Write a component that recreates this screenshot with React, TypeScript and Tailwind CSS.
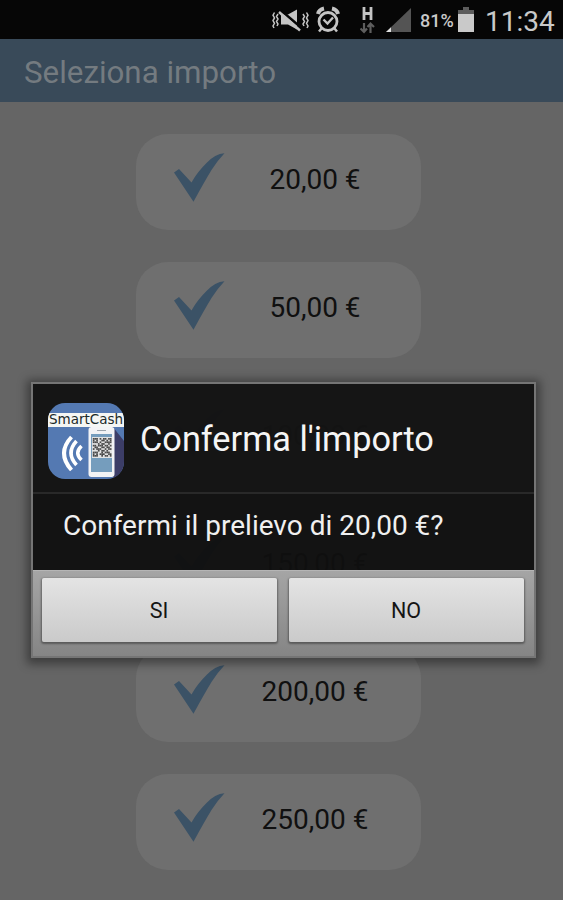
import React from 'react'

const AMOUNTS = ['20,00 €', '50,00 €', '100,00 €', '150,00 €', '200,00 €', '250,00 €']

// Dark modules of the code on the phone screen
const QR_ROWS = [
  '11101011011',
  '10100110101',
  '11101001111',
  '00010110010',
  '11011101101',
  '01100110110',
  '10111001011',
  '00010110100',
  '11100101110',
  '10101110011',
  '11100101101',
]

const StatusBar = () => (
  <div className="flex h-[39px] shrink-0 items-center bg-[#060606] pl-[270px] text-[#c9c9c9]">
    {/* Muted, vibrate */}
    <svg width="40" height="30" viewBox="0 0 40 30" className="shrink-0" fill="none" stroke="#c4c4c4">
      <path d="M4.500 7.500l-1.500 2.700 1.500 2.700-1.500 2.700 1.500 2.700-1.500 2.700 1 2M8 9l-1.500 2.500 1.500 2.500-1.500 2.500 1.500 2.500-1 2" strokeWidth="1.500" />
      <path d="M36.500 7.500l1.500 2.700-1.500 2.700 1.500 2.700-1.500 2.700 1.500 2.700-1 2M33 9l1.500 2.500-1.500 2.500 1.500 2.500-1.500 2.500 1 2" strokeWidth="1.500" />
      <path d="M11 9.500h7l9-5v20l-9-5h-7z" fill="#c4c4c4" stroke="none" />
      <path d="M11 5.500l20 17" stroke="#060606" strokeWidth="2.500" />
      <path d="M9 7l21 18.500" strokeWidth="2.500" />
    </svg>
    {/* Alarm */}
    <svg width="26" height="30" viewBox="0 0 26 30" className="ml-[6px] shrink-0" fill="none" stroke="#c4c4c4">
      <circle cx="12" cy="16.500" r="9" strokeWidth="2.800" />
      <path d="M2 9q1-4.500 6-5.500M22 9q-1-4.500-6-5.500" strokeWidth="4" />
      <path d="M5.500 23.500l-2.500 3M18.500 23.500l2.500 3" strokeWidth="2.500" />
      <path d="M7.500 14.500l4 4 5.500-6" strokeWidth="2.400" />
    </svg>
    {/* Mobile data */}
    <svg width="16" height="28" viewBox="0 0 16 28" className="ml-[18px] shrink-0" fill="none">
      <path d="M4 1v13M11 1v13M4 7.500h7" stroke="#c4c4c4" strokeWidth="2.800" />
      <path d="M4 17v9M.500 22.500l3.500 3.500 3-3.500M10.500 27v-9M7.500 21l3-3.500 3.500 3.500" stroke="#5e5e5e" strokeWidth="2.200" />
    </svg>
    <svg width="26" height="26" viewBox="0 0 26 26" className="ml-[10px] shrink-0">
      <path d="M0 25L25 1v24z" fill="#545454" />
      <path d="M0 25l5-4.800V25z" fill="#e0e0e0" />
    </svg>
    <span className="mt-[3px] ml-[8px] w-[36px] text-[18px] leading-none font-medium">81%</span>
    <svg width="16" height="26" viewBox="0 0 16 26" className="ml-[2px] shrink-0">
      <path d="M5 0h6v3h5v5H0V3h5z" fill="#5c5c5c" />
      <path d="M0 7h16v18H0z" fill="#c9c9c9" />
    </svg>
    <span className="mt-[4px] ml-[11px] text-[28px] leading-none">11:34</span>
  </div>
)

const AmountRow = ({ label }: { label: string }) => (
  <div className="flex h-[96px] w-[285px] shrink-0 items-center rounded-[32px] bg-[#6f6f6f]">
    <svg width="52" height="50" viewBox="0 0 52 50" className="mb-[9px] ml-[38px] shrink-0">
      <path d="M0 19.500L5 16L17.500 29.500C22 21.500 27 15.500 32.500 10Q41 1 50.500 .300Q44 7 37.500 17Q29 31 19.500 48.800Z" fill="#3b5266" />
    </svg>
    <span className="mr-[32px] mb-[4px] flex-1 pl-[15px] text-center text-[28px] leading-none text-[#101010]">{label}</span>
  </div>
)

const AppIcon = () => (
  <div className="relative h-[76px] w-[76px] shrink-0 overflow-hidden rounded-[17px] bg-[#5479b2]">
    <svg width="76" height="76" viewBox="0 0 76 76">
      <path d="M65 24l11 14v38H65z" fill="#3c3d67" />
      <rect x="40.500" y="24" width="26" height="50" rx="3" fill="#f2f3f5" />
      <rect x="43" y="31" width="21" height="38" fill="#759dbd" />
      <rect x="49" y="27" width="9" height="1" fill="#9da5ad" />
      <rect x="44" y="34" width="20" height="21" fill="#e2e2e2" />
      {QR_ROWS.map((row, y) =>
        row.split('').map((cell, x) =>
          cell === '1' ? (
            <rect key={`${x}-${y}`} x={44.8 + x * 1.7} y={35 + y * 1.7} width="1.700" height="1.700" fill="#4a4a4a" />
          ) : null
        )
      )}
      <g fill="none" stroke="#fff" strokeWidth="3.600">
        <path d="M23.500 34q-15 16 0 33" strokeWidth="4" />
        <path d="M28.500 38q-11 12 0 24" />
        <path d="M33.500 43q-7.500 7 0 14" />
      </g>
    </svg>
    <div className="absolute top-[10px] left-0 flex h-[14px] w-full items-center justify-center bg-[#f4f6f4] font-['DejaVu_Sans'] text-[13.500px] leading-none text-[#1c2a2a]">
      SmartCash
    </div>
  </div>
)

const DialogButton = ({ label }: { label: string }) => (
  <button className="flex h-[64px] flex-1 items-center justify-center rounded-[2px] bg-linear-to-b from-[#e4e4e4] to-[#cacaca] pt-[2px] pr-[1px] text-[21.500px] text-[#151515] shadow-[0_1px_2px_1px_rgba(0,0,0,0.35)]">
    {label}
  </button>
)

const ConfirmDialog = () => (
  <div className="absolute top-[382px] left-[31px] flex h-[276px] w-[505px] flex-col border-2 border-[#757575] shadow-[0_2px_9px_4px_rgba(0,0,0,0.4)]">
    <div className="flex h-[110px] shrink-0 items-center border-b-2 border-[#292929] bg-[#131313]/98 pl-[15px]">
      <div className="mt-[5px]">
        <AppIcon />
      </div>
      <h2 className="mt-[2px] ml-[16px] text-[34.300px] leading-none text-[#f5f5f5]">Conferma l'importo</h2>
    </div>
    <div className="h-[76px] shrink-0 bg-[#101010]/96 pt-[18px] pl-[30px] text-[28px] leading-none text-[#f0f0f0]">
      Confermi il prelievo di 20,00 €?
    </div>
    <div className="flex flex-1 gap-[12px] border-t border-[#b5b5b5] bg-linear-to-b from-[#a5a5a5] to-[#858585] pt-[7px] pr-[10px] pl-[9px]">
      <DialogButton label="SI" />
      <DialogButton label="NO" />
    </div>
  </div>
)

const App = () => {
  return (
    <div className="relative flex h-[900px] w-[563px] flex-col overflow-hidden bg-[#656565] font-['Roboto',sans-serif]">
      <StatusBar />
      <header className="flex h-[63px] shrink-0 items-center bg-[#394a59] pl-[24px]">
        <h1 className="mt-[4px] text-[31.300px] leading-none text-[#747b80]">Seleziona importo</h1>
      </header>
      <main className="flex flex-col items-center gap-[32px] pt-[32px] pr-[6px]">
        {AMOUNTS.map((amount) => (
          <AmountRow key={amount} label={amount} />
        ))}
      </main>
      <ConfirmDialog />
    </div>
  )
}

export default App
